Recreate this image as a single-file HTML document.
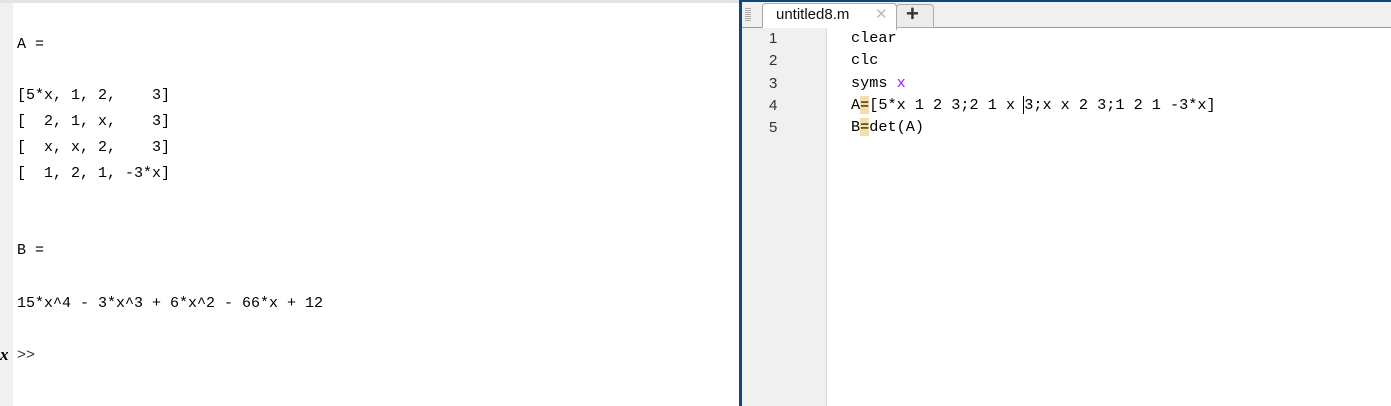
<!DOCTYPE html>
<html><head><meta charset="utf-8"><style>
body{margin:0;width:1391px;height:406px;position:relative;overflow:hidden;background:#fff;font-family:"Liberation Mono",monospace}
.a{position:absolute}
.con{font-size:15px;color:#000;white-space:pre;line-height:15px}
.ed{font-size:15.2px;white-space:pre;line-height:16px;color:#000}
.ln{font-family:"Liberation Sans",sans-serif;font-size:15px;color:#333;line-height:16px}
.hl{background:#f5dfa8}
</style></head><body>
<div class="a" style="left:0;top:0;width:739px;height:3px;background:#e4e4e4"></div>
<div class="a" style="left:0;top:3px;width:13px;height:403px;background:#f0f0f0"></div>
<div class="a con" style="left:17px;top:37px">A =</div>
<div class="a con" style="left:17px;top:88px">[5*x, 1, 2,    3]</div>
<div class="a con" style="left:17px;top:114px">[  2, 1, x,    3]</div>
<div class="a con" style="left:17px;top:140px">[  x, x, 2,    3]</div>
<div class="a con" style="left:17px;top:166px">[  1, 2, 1, -3*x]</div>
<div class="a con" style="left:17px;top:243px">B =</div>
<div class="a con" style="left:17px;top:296px">15*x^4 - 3*x^3 + 6*x^2 - 66*x + 12</div>
<div class="a" style="left:0;top:345px;font-family:'Liberation Serif',serif;font-style:italic;font-weight:bold;font-size:17px">x</div>
<div class="a con" style="left:17px;top:348px;color:#333">&gt;&gt;</div>

<div class="a" style="left:739px;top:0;width:3px;height:406px;background:#10467a"></div>
<div class="a" style="left:742px;top:0;width:649px;height:2px;background:#10467a"></div>
<div class="a" style="left:742px;top:2px;width:649px;height:25px;background:#f0f0f0;border-bottom:1px solid #999"></div>
<div class="a" style="left:745px;top:8px;width:6px;height:14px;background:repeating-linear-gradient(#aaa 0 1px,transparent 1px 2px)"></div>
<div class="a" style="left:762px;top:3px;width:133px;height:26px;background:#fff;border:1px solid #aaa;border-bottom:none;border-radius:4px 4px 0 0"></div>
<div class="a" style="left:776px;top:6px;font-family:'Liberation Sans',sans-serif;font-size:15px;color:#111">untitled8.m</div>
<div class="a" style="left:875px;top:5px;font-family:'Liberation Sans',sans-serif;font-size:15px;color:#bbb">✕</div>
<div class="a" style="left:896px;top:4px;width:36px;height:22px;background:#ececec;border:1px solid #aaa;border-radius:4px 4px 0 0"></div>
<div class="a" style="left:906px;top:1px;font-family:'Liberation Sans',sans-serif;font-size:22px;font-weight:bold;color:#333">+</div>
<div class="a" style="left:742px;top:28px;width:84px;height:378px;background:#f0f0f0;border-right:1px solid #ddd"></div>
<div class="a ln" style="left:769px;top:31px">1</div>
<div class="a ln" style="left:769px;top:53px">2</div>
<div class="a ln" style="left:769px;top:76px">3</div>
<div class="a ln" style="left:769px;top:98px">4</div>
<div class="a ln" style="left:769px;top:120px">5</div>
<div class="a ed" style="left:851px;top:30px">clear</div>
<div class="a ed" style="left:851px;top:52px">clc</div>
<div class="a ed" style="left:851px;top:75px">syms <span style="color:#a020f0">x</span></div>
<div class="a ed" style="left:851px;top:97px">A<span class="hl">=</span>[5*x 1 2 3;2 1 x <span style="border-left:1px solid #000;margin-left:-1px">3</span>;x x 2 3;1 2 1 -3*x]</div>
<div class="a ed" style="left:851px;top:119px">B<span class="hl">=</span>det(A)</div>
</body></html>
